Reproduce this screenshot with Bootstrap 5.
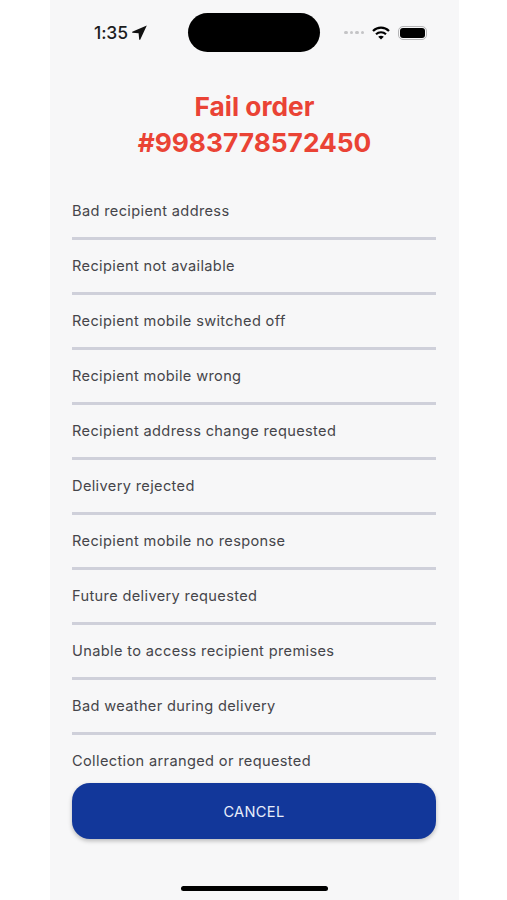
<!DOCTYPE html>
<html lang="en">
<head>
<meta charset="utf-8">
<title>Fail order</title>
<link rel="stylesheet" href="https://cdn.jsdelivr.net/npm/bootstrap@5.3.0/dist/css/bootstrap.min.css">
<style>
html, body { height: 100%; background: #fff; }
body { font-family: Inter, "Liberation Sans", sans-serif; overflow: hidden; }
.phone-screen { width: 409px; height: 900px; margin-left: 50px; background: #f7f7f8; }
.status-row { height: 70px; padding: 13px 32px 0 44px; }
.status-time { font-size: 17.5px; font-weight: 500; color: #1c1c1e; line-height: 39px; letter-spacing: -.1px; }
.status-left { width: 94px; }
.status-right { width: 107px; height: 39px; }
.island { width: 132px; height: 39px; background: #000; border-radius: 20px; }
.status-dots { gap: 2px; }
.status-dot { width: 3.5px; height: 3.5px; border-radius: 50%; background: #c4c4c6; }
.battery-shell { width: 29px; height: 14px; border: 1.5px solid #b5b5b7; border-radius: 5px; padding: 1px; }
.battery-fill { background: #000; border-radius: 3px; height: 100%; }
.fail-title { font-size: 26.3px; font-weight: 650; line-height: 35.5px; color: #ea4335; margin: 19px 0 0; }
.reason-list { padding: 0 23px 0 22px; margin-top: 25px; }
.reason-item { height: 55px; border: 0; border-bottom: 3px solid #cfd0da; background: transparent; padding: 2px 0 0; font-size: 14.6px; letter-spacing: .35px; color: #45454a; display: flex; align-items: center; border-radius: 0; }
.reason-item:last-child { border-bottom: 3px solid transparent; }
.cancel-btn { display: block; width: 364px; height: 56px; margin: -7px 0 0 22px; padding-top: 9px; background: #12379a; border: 0; border-radius: 18px; color: #e8edfa; font-size: 14.6px; font-weight: 400; letter-spacing: .35px; box-shadow: 0 2px 4px rgba(0,0,0,.25); }
.home-bar { width: 147px; height: 5px; background: #000; border-radius: 3px; margin: 47px 0 0 131px; }
</style>
</head>
<body>
<div class="phone-screen d-flex flex-column">
  <div class="status-row d-flex justify-content-between align-items-start">
    <div class="status-left d-flex align-items-center">
      <span class="status-time">1:35</span>
      <svg class="ms-1" width="15" height="15" viewBox="0 0 15 15"><path d="M14.8 .4 L.2 6.8 L.2 7.8 L6.6 8.2 L7.2 14.8 L8.2 14.8 Z" fill="#111"/></svg>
    </div>
    <div class="island"></div>
    <div class="status-right d-flex align-items-center justify-content-end">
      <div class="status-dots d-flex me-2"><span class="status-dot"></span><span class="status-dot"></span><span class="status-dot"></span><span class="status-dot"></span></div>
      <svg class="me-2" width="18" height="14" viewBox="0 0 18 14" fill="none" stroke="#000" stroke-width="2.2"><path d="M1 5 C5.5 .6 12.5 .6 17 5"/><path d="M4 8.2 C6.8 5.6 11.2 5.6 14 8.2"/><path d="M9 13.6 L6.2 10.8 C7.8 9.5 10.2 9.5 11.8 10.8 Z" fill="#000" stroke="none"/></svg>
      <div class="battery-shell"><div class="battery-fill"></div></div>
    </div>
  </div>
  <h1 class="fail-title text-center">Fail order<br>#9983778572450</h1>
  <div class="list-group reason-list">
    <div class="list-group-item reason-item">Bad recipient address</div>
    <div class="list-group-item reason-item">Recipient not available</div>
    <div class="list-group-item reason-item">Recipient mobile switched off</div>
    <div class="list-group-item reason-item">Recipient mobile wrong</div>
    <div class="list-group-item reason-item">Recipient address change requested</div>
    <div class="list-group-item reason-item">Delivery rejected</div>
    <div class="list-group-item reason-item">Recipient mobile no response</div>
    <div class="list-group-item reason-item">Future delivery requested</div>
    <div class="list-group-item reason-item">Unable to access recipient premises</div>
    <div class="list-group-item reason-item">Bad weather during delivery</div>
    <div class="list-group-item reason-item">Collection arranged or requested</div>
  </div>
  <button type="button" class="btn cancel-btn">CANCEL</button>
  <div class="home-bar"></div>
</div>
<script src="https://cdn.jsdelivr.net/npm/bootstrap@5.3.0/dist/js/bootstrap.bundle.min.js"></script>
</body>
</html>
